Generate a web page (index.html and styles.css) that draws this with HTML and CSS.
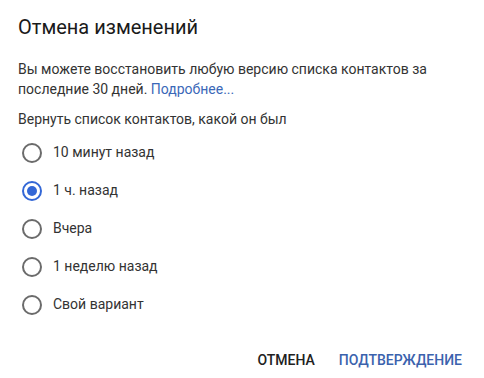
FILE: index.html
```html
<!DOCTYPE html>
<html lang="ru">
<head>
  <meta charset="UTF-8">
  <meta name="viewport" content="width=device-width, initial-scale=1.0">
  <title>Отмена изменений</title>
  <link rel="stylesheet" href="styles.css">
</head>
<body>
  <div class="dialog">
    <h1 class="title">Отмена изменений</h1>
    <p class="desc">Вы можете восстановить любую версию списка контактов за последние 30 дней. <a class="link" href="#">Подробнее...</a></p>
    <p class="desc">Вернуть список контактов, какой он был</p>
    <div class="options">
      <label class="option"><span class="radio"></span>10 минут назад</label>
      <label class="option"><span class="radio checked"></span>1 ч. назад</label>
      <label class="option"><span class="radio"></span>Вчера</label>
      <label class="option"><span class="radio"></span>1 неделю назад</label>
      <label class="option"><span class="radio"></span>Свой вариант</label>
    </div>
    <div class="actions">
      <div class="btn">Отмена</div>
      <div class="btn primary">Подтверждение</div>
    </div>
  </div>
</body>
</html>
```
FILE: styles.css
```css
html, body {
  margin: 0;
  padding: 0;
  background: #fff;
}
body {
  font-family: Roboto, "Liberation Sans", sans-serif;
  color: #333;
}
.dialog {
  padding: 15px 14px 0 18px;
}
.title {
  margin: 0;
  font-size: 20px;
  line-height: 24px;
  font-weight: 400;
  color: #1a1a1a;
}
.desc {
  margin: 20px 0 0;
  font-size: 14px;
  line-height: 20px;
  padding-right: 20px;
}
.desc + .desc {
  margin-top: 10px;
}
.link {
  color: #3b68b8;
  text-decoration: none;
}
.options {
  margin-top: 4px;
}
.option {
  display: flex;
  align-items: center;
  height: 38px;
  font-size: 14px;
  line-height: 20px;
  color: #333;
}
.radio {
  box-sizing: border-box;
  width: 20px;
  height: 20px;
  margin: 2px 11px 0 4px;
  border: 2px solid #6b6b6b;
  border-radius: 50%;
  position: relative;
}
.radio.checked {
  border-color: #3367d6;
}
.radio.checked::after {
  content: '';
  position: absolute;
  left: 3px;
  top: 3px;
  width: 10px;
  height: 10px;
  border-radius: 50%;
  background: #3367d6;
}
.actions {
  display: flex;
  justify-content: flex-end;
  gap: 8px;
  margin-top: 19px;
}
.btn {
  height: 36px;
  line-height: 36px;
  padding: 0 8px;
  font-size: 14px;
  font-weight: 500;
  text-transform: uppercase;
  color: #212121;
  cursor: pointer;
}
.btn.primary {
  color: #3b62ad;
}
```
